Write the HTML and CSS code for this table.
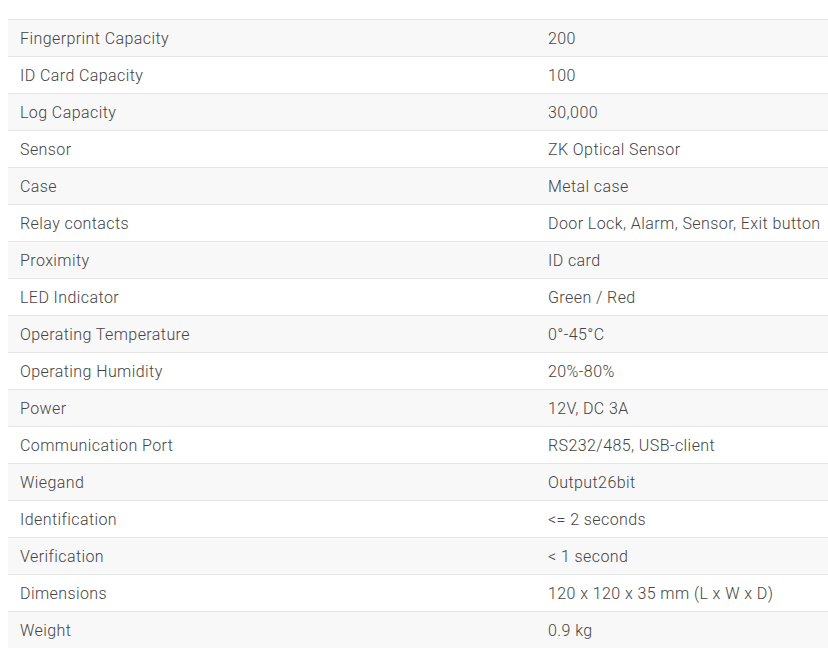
FILE: index.html
```html
<!DOCTYPE html>
<html>
<head>
<meta charset="utf-8">
<link rel="stylesheet" href="styles.css">
</head>
<body>
<div class="wrap">
<table class="specs">
<tbody>
<tr><td class="k">Fingerprint Capacity</td><td class="v">200</td></tr>
<tr><td class="k">ID Card Capacity</td><td class="v">100</td></tr>
<tr><td class="k">Log Capacity</td><td class="v">30,000</td></tr>
<tr><td class="k">Sensor</td><td class="v">ZK Optical Sensor</td></tr>
<tr><td class="k">Case</td><td class="v">Metal case</td></tr>
<tr><td class="k">Relay contacts</td><td class="v">Door Lock, Alarm, Sensor, Exit button</td></tr>
<tr><td class="k">Proximity</td><td class="v">ID card</td></tr>
<tr><td class="k">LED Indicator</td><td class="v">Green / Red</td></tr>
<tr><td class="k">Operating Temperature</td><td class="v">0°-45°C</td></tr>
<tr><td class="k">Operating Humidity</td><td class="v">20%-80%</td></tr>
<tr><td class="k">Power</td><td class="v">12V, DC 3A</td></tr>
<tr><td class="k">Communication Port</td><td class="v">RS232/485, USB-client</td></tr>
<tr><td class="k">Wiegand</td><td class="v">Output26bit</td></tr>
<tr><td class="k">Identification</td><td class="v">&lt;= 2 seconds</td></tr>
<tr><td class="k">Verification</td><td class="v">&lt; 1 second</td></tr>
<tr><td class="k">Dimensions</td><td class="v">120 x 120 x 35 mm (L x W x D)</td></tr>
<tr><td class="k">Weight</td><td class="v">0.9 kg</td></tr>
</tbody>
</table>
</div>
</body>
</html>
```
FILE: styles.css
```css
html, body {
  margin: 0;
  padding: 0;
  background: #fff;
  overflow: hidden;
}
.wrap {
  padding: 19px 0 0 8px;
  width: 840px;
}
.specs {
  border-collapse: collapse;
  width: 840px;
  font-family: Roboto, "Liberation Sans", sans-serif;
  font-size: 16px;
  font-weight: 300;
  letter-spacing: 0.42px;
  color: #444;
}
.specs td {
  border-top: 1px solid #e5e5e5;
  height: 36px;
  padding: 0 0 0 12px;
  vertical-align: middle;
  white-space: nowrap;
}
.specs .k {
  width: 516px;
}
.specs tr:nth-child(odd) td {
  background: #f8f8f8;
}
```
